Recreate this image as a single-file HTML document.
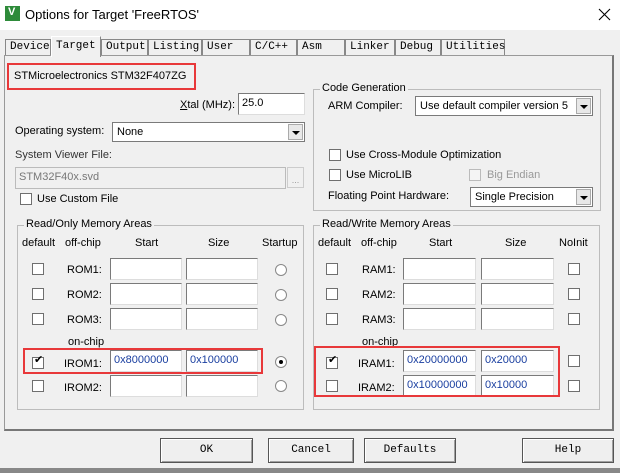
<!DOCTYPE html><html><head><style>
body{margin:0;width:620px;height:473px;background:#f0f0f0;font-family:"Liberation Sans",sans-serif;font-size:11px;color:#000;position:relative;overflow:hidden}
.a{position:absolute;white-space:nowrap}
.in{position:absolute;background:#fff;border:1px solid #7a7a7a;border-right-color:#ddd;border-bottom-color:#ddd;box-sizing:border-box;height:22px;padding:3px 3px;color:#000}
.cb{position:absolute;width:12px;height:12px;background:#fff;border:1px solid #6f6f6f;box-sizing:border-box}
.rd{position:absolute;width:12px;height:12px;border-radius:50%;background:#fff;border:1px solid #888;box-sizing:border-box}
.gb{position:absolute;border:1px solid #bcbcbc;box-sizing:border-box}
.gt{position:absolute;background:#f0f0f0;padding:0 2px;top:-8px;left:6px}
.tab{position:absolute;top:39px;height:16px;border:1px solid #888;border-bottom:none;box-sizing:border-box;font-family:"Liberation Mono",monospace;font-size:11px;padding:1px 0 0 4px;background:#f0f0f0}
.btn{position:absolute;top:438px;height:25px;border:1px solid #555;box-sizing:border-box;background:#efefef;box-shadow:inset 1px 1px #fff,inset -1px -1px #a0a0a0;text-align:center;line-height:22px;font-family:"Liberation Mono",monospace;font-size:11px}
.red{position:absolute;border:2px solid #e8383a;box-sizing:border-box}
.dd{position:absolute;background:#fff;border:1px solid #7a7a7a;box-sizing:border-box;height:20px;padding:3px 4px;overflow:hidden}
.dd i{position:absolute;right:1px;top:1px;width:15px;height:16px;background:#e8e8e8;border:1px solid #aaa;box-sizing:border-box}
.dd i:after{content:"";position:absolute;left:3px;top:6px;border:4px solid transparent;border-top:4px solid #000;border-bottom:0}
.blue{color:#1a3fa0}
</style></head><body>
<div class="a" style="left:0;top:0;width:620px;height:30px;background:#fff"></div>
<div class="a" style="left:5px;top:6px;width:15px;height:15px;background:#2e8b3a"></div>
<div class="a" style="left:8px;top:6px;color:#fff;font-size:11px;font-weight:bold">V</div>
<div class="a" style="left:25px;top:7px;font-size:13px">Options for Target 'FreeRTOS'</div>
<svg class="a" style="left:598px;top:8px" width="13" height="13"><path d="M1 1L12 12M12 1L1 12" stroke="#000" stroke-width="1.1"/></svg>

<div class="a" style="left:4px;top:55px;width:610px;height:376px;border:1px solid #999;border-right:2px solid #777;border-bottom:2px solid #777;box-sizing:border-box;background:#f0f0f0"></div>
<div class="tab" style="left:5px;width:46px">Device</div>
<div class="tab" style="left:51px;width:50px;top:36px;height:21px;background:#f0f0f0;border-color:#fff #888 transparent #fff;padding-top:3px">Target</div>
<div class="tab" style="left:101px;width:47px">Output</div>
<div class="tab" style="left:148px;width:54px">Listing</div>
<div class="tab" style="left:202px;width:48px">User</div>
<div class="tab" style="left:250px;width:47px">C/C++</div>
<div class="tab" style="left:297px;width:48px">Asm</div>
<div class="tab" style="left:345px;width:50px">Linker</div>
<div class="tab" style="left:395px;width:46px">Debug</div>
<div class="tab" style="left:441px;width:64px">Utilities</div>

<div class="a" style="left:14px;top:70px">STMicroelectronics STM32F407ZG</div>
<div class="red" style="left:7px;top:63px;width:189px;height:27px"></div>
<div class="a" style="left:180px;top:99px"><u>X</u>tal (MHz):</div>
<div class="in" style="left:238px;top:93px;width:67px">25.0</div>
<div class="a" style="left:15px;top:125px">Operating system:</div>
<div class="dd" style="left:112px;top:122px;width:193px">None<i></i></div>
<div class="a" style="left:15px;top:149px;color:#333">System Viewer File:</div>
<div class="in" style="left:15px;top:167px;width:271px;background:#f0f0f0;color:#777;border-color:#bbb">STM32F40x.svd</div>
<div class="a" style="left:287px;top:167px;width:17px;height:21px;border:1px solid #ccc;box-sizing:border-box;color:#999;font-size:9px;text-align:center;line-height:24px">...</div>
<div class="cb" style="left:20px;top:193px"></div><div class="a" style="left:37px;top:193px">Use Custom File</div>

<div class="gb" style="left:313px;top:89px;width:288px;height:122px"><span class="gt">Code Generation</span></div>
<div class="a" style="left:328px;top:100px">ARM Compiler:</div>
<div class="dd" style="left:415px;top:96px;width:178px">Use default compiler version 5<i></i></div>
<div class="cb" style="left:329px;top:149px"></div><div class="a" style="left:346px;top:149px">Use Cross-Module Optimization</div>
<div class="cb" style="left:329px;top:169px"></div><div class="a" style="left:346px;top:169px">Use MicroLIB</div>
<div class="cb" style="left:469px;top:169px;border-color:#bbb;background:#f4f4f4"></div><div class="a" style="left:487px;top:169px;color:#999">Big Endian</div>
<div class="a" style="left:328px;top:190px">Floating Point Hardware:</div>
<div class="dd" style="left:470px;top:187px;width:123px">Single Precision<i></i></div>

<div class="gb" style="left:17px;top:225px;width:287px;height:185px"><span class="gt">Read/Only Memory Areas</span></div>
<div class="a" style="left:22px;top:237px">default</div><div class="a" style="left:65px;top:237px">off-chip</div>
<div class="a" style="left:135px;top:237px">Start</div><div class="a" style="left:208px;top:237px">Size</div><div class="a" style="left:262px;top:237px">Startup</div>
<div class="gb" style="left:313px;top:225px;width:287px;height:185px"><span class="gt">Read/Write Memory Areas</span></div>
<div class="a" style="left:318px;top:237px">default</div><div class="a" style="left:361px;top:237px">off-chip</div>
<div class="a" style="left:429px;top:237px">Start</div><div class="a" style="left:505px;top:237px">Size</div><div class="a" style="left:559px;top:237px">NoInit</div>

<div class="cb" style="left:32px;top:263px"></div><div class="a" style="left:67px;top:264px">ROM1:</div><div class="in" style="left:110px;top:258px;width:72px"></div><div class="in" style="left:186px;top:258px;width:72px"></div><div class="rd" style="left:275px;top:264px"></div>
<div class="cb" style="left:32px;top:288px"></div><div class="a" style="left:67px;top:289px">ROM2:</div><div class="in" style="left:110px;top:283px;width:72px"></div><div class="in" style="left:186px;top:283px;width:72px"></div><div class="rd" style="left:275px;top:289px"></div>
<div class="cb" style="left:32px;top:313px"></div><div class="a" style="left:67px;top:314px">ROM3:</div><div class="in" style="left:110px;top:308px;width:72px"></div><div class="in" style="left:186px;top:308px;width:72px"></div><div class="rd" style="left:275px;top:314px"></div>
<div class="a" style="left:68px;top:336px">on-chip</div>
<div class="cb" style="left:32px;top:357px"></div><div class="a" style="left:34px;top:353px;font-size:11px">✔</div><div class="a" style="left:64px;top:358px">IROM1:</div><div class="in blue" style="left:110px;top:350px;width:72px">0x8000000</div><div class="in blue" style="left:186px;top:350px;width:72px">0x100000</div><div class="rd" style="left:275px;top:356px"></div><div class="a" style="left:279px;top:360px;width:4px;height:4px;border-radius:50%;background:#000"></div>
<div class="cb" style="left:32px;top:380px"></div><div class="a" style="left:64px;top:382px">IROM2:</div><div class="in" style="left:110px;top:375px;width:72px"></div><div class="in" style="left:186px;top:375px;width:72px"></div><div class="rd" style="left:275px;top:380px"></div>
<div class="red" style="left:23px;top:348px;width:240px;height:26px"></div>

<div class="cb" style="left:326px;top:263px"></div><div class="a" style="left:362px;top:264px">RAM1:</div><div class="in" style="left:403px;top:258px;width:73px"></div><div class="in" style="left:481px;top:258px;width:73px"></div><div class="cb" style="left:568px;top:263px"></div>
<div class="cb" style="left:326px;top:288px"></div><div class="a" style="left:362px;top:289px">RAM2:</div><div class="in" style="left:403px;top:283px;width:73px"></div><div class="in" style="left:481px;top:283px;width:73px"></div><div class="cb" style="left:568px;top:288px"></div>
<div class="cb" style="left:326px;top:313px"></div><div class="a" style="left:362px;top:314px">RAM3:</div><div class="in" style="left:403px;top:308px;width:73px"></div><div class="in" style="left:481px;top:308px;width:73px"></div><div class="cb" style="left:568px;top:313px"></div>
<div class="a" style="left:362px;top:336px">on-chip</div>
<div class="cb" style="left:326px;top:357px"></div><div class="a" style="left:328px;top:353px;font-size:11px">✔</div><div class="a" style="left:358px;top:358px">IRAM1:</div><div class="in blue" style="left:403px;top:350px;width:73px">0x20000000</div><div class="in blue" style="left:481px;top:350px;width:73px">0x20000</div><div class="cb" style="left:568px;top:355px"></div>
<div class="cb" style="left:326px;top:380px"></div><div class="a" style="left:358px;top:382px">IRAM2:</div><div class="in blue" style="left:403px;top:375px;width:73px">0x10000000</div><div class="in blue" style="left:481px;top:375px;width:73px">0x10000</div><div class="cb" style="left:568px;top:380px"></div>
<div class="red" style="left:314px;top:346px;width:246px;height:51px"></div>

<div class="btn" style="left:160px;width:93px">OK</div>
<div class="btn" style="left:268px;width:86px">Cancel</div>
<div class="btn" style="left:364px;width:92px">Defaults</div>
<div class="btn" style="left:522px;width:92px">Help</div>
<div class="a" style="left:0;top:468px;width:620px;height:5px;background:#888"></div>
</body></html>
